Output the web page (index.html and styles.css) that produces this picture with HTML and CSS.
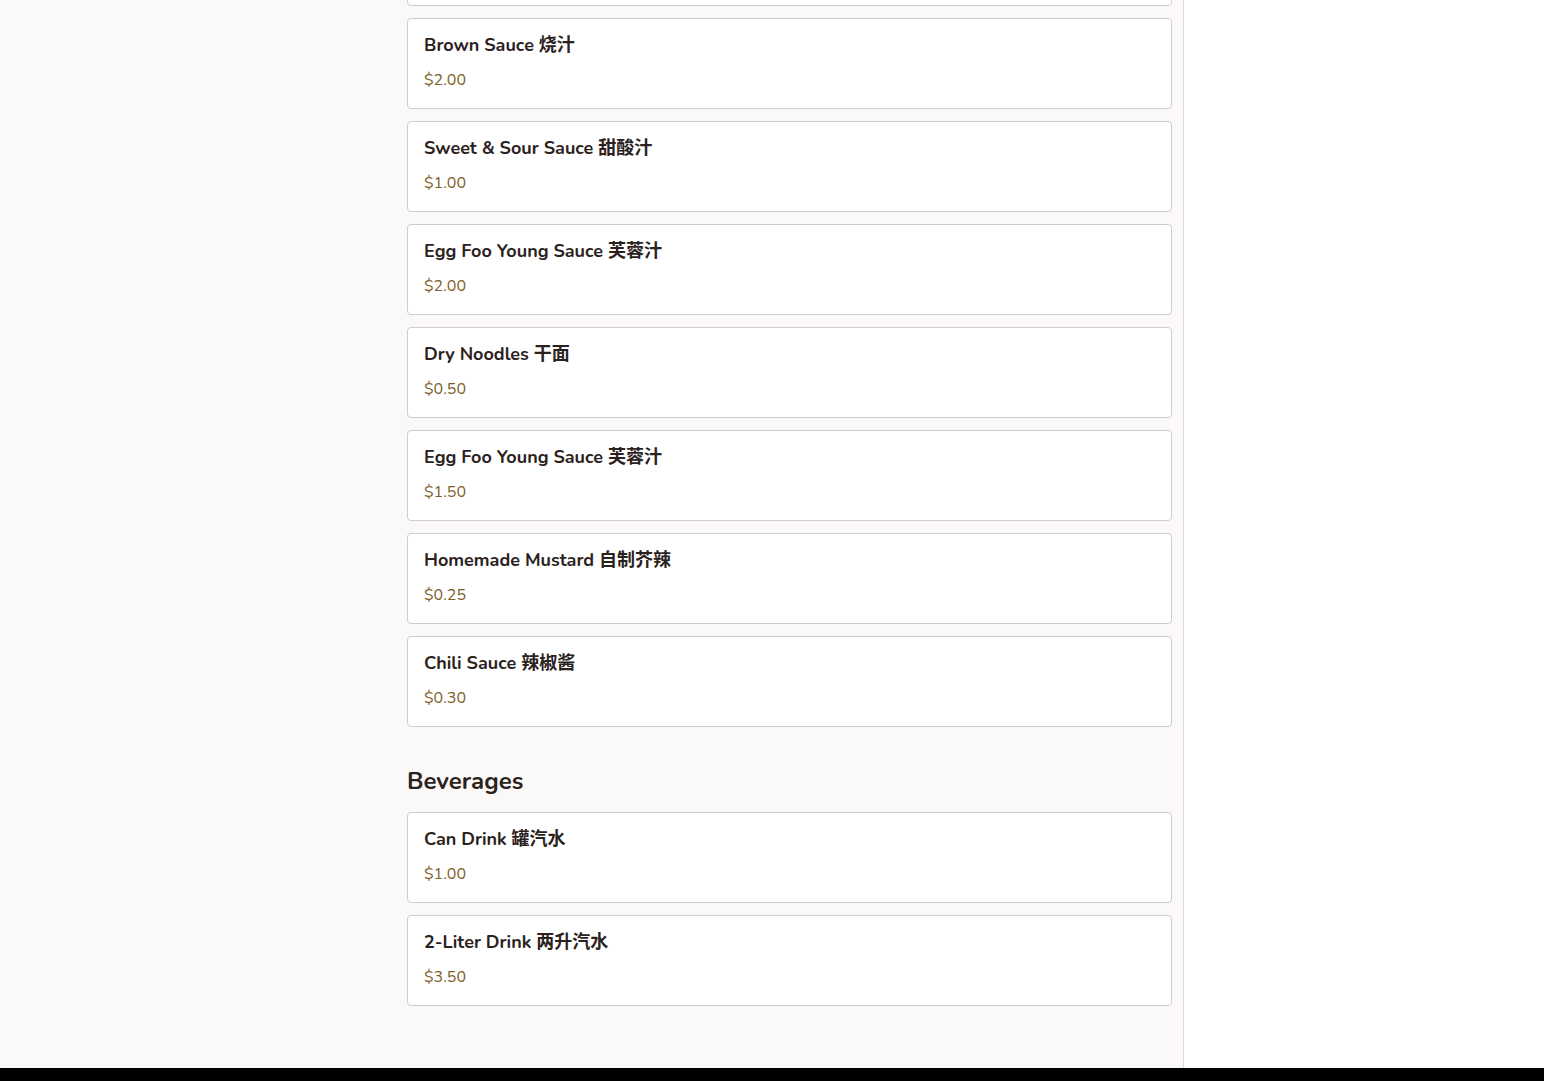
FILE: index.html
```html
<!DOCTYPE html>
<html lang="en">
<head>
<meta charset="utf-8">
<title>Menu</title>
<link rel="stylesheet" href="styles.css">
</head>
<body>
<div class="layout">
  <main class="main">
    <div class="menu">
      <section class="section">
        <div class="item"><div class="item-name">Chicken Balls 鸡球</div><div class="item-price">$8.50</div></div>
        <div class="item"><div class="item-name">Brown Sauce 烧汁</div><div class="item-price">$2.00</div></div>
        <div class="item"><div class="item-name">Sweet &amp; Sour Sauce 甜酸汁</div><div class="item-price">$1.00</div></div>
        <div class="item"><div class="item-name">Egg Foo Young Sauce 芙蓉汁</div><div class="item-price">$2.00</div></div>
        <div class="item"><div class="item-name">Dry Noodles 干面</div><div class="item-price">$0.50</div></div>
        <div class="item"><div class="item-name">Egg Foo Young Sauce 芙蓉汁</div><div class="item-price">$1.50</div></div>
        <div class="item"><div class="item-name">Homemade Mustard 自制芥辣</div><div class="item-price">$0.25</div></div>
        <div class="item"><div class="item-name">Chili Sauce 辣椒酱</div><div class="item-price">$0.30</div></div>
      </section>
      <section class="section">
        <h2 class="section-title">Beverages</h2>
        <div class="item"><div class="item-name">Can Drink 罐汽水</div><div class="item-price">$1.00</div></div>
        <div class="item"><div class="item-name">2-Liter Drink 两升汽水</div><div class="item-price">$3.50</div></div>
      </section>
    </div>
  </main>
  <aside class="aside"></aside>
</div>
<footer class="footer"></footer>
</body>
</html>
```

FILE: styles.css
```css
html, body {
  margin: 0;
  height: 100%;
}
body {
  display: flex;
  flex-direction: column;
  overflow: hidden;
  font-family: "Nunito", "Lato", "Noto Sans CJK SC", sans-serif;
  color: #2b221d;
  background: #ffffff;
}
.layout {
  flex: 0 0 1068px;
  display: flex;
  min-height: 0;
}
.main {
  width: 1184px;
  box-sizing: border-box;
  background: #faf9f7;
  border-right: 1px solid #dedbd8;
  display: flex;
  flex-direction: column;
  justify-content: flex-end;
  overflow: hidden;
  padding: 0 0 62px 407px;
}
.menu {
  width: 765px;
}
.section + .section {
  margin-top: 39px;
}
.section-title {
  margin: 0 0 16px;
  font-size: 24px;
  line-height: 30px;
  font-weight: 700;
  color: #2b221d;
}
.item {
  background: #ffffff;
  border: 1px solid #cfcccb;
  border-radius: 4px;
  padding: 13px 16px 13px;
  height: 91px;
  box-sizing: border-box;
}
.item + .item {
  margin-top: 12px;
}
.item-name {
  font-size: 18px;
  line-height: 26px;
  font-weight: 700;
  color: #2b221d;
}
.item-price {
  margin-top: 11px;
  font-size: 16px;
  line-height: 22px;
  color: #7c5e2a;
}
.aside {
  flex: 1;
  background: #ffffff;
}
.footer {
  flex: 1;
  background: #000000;
}
```
